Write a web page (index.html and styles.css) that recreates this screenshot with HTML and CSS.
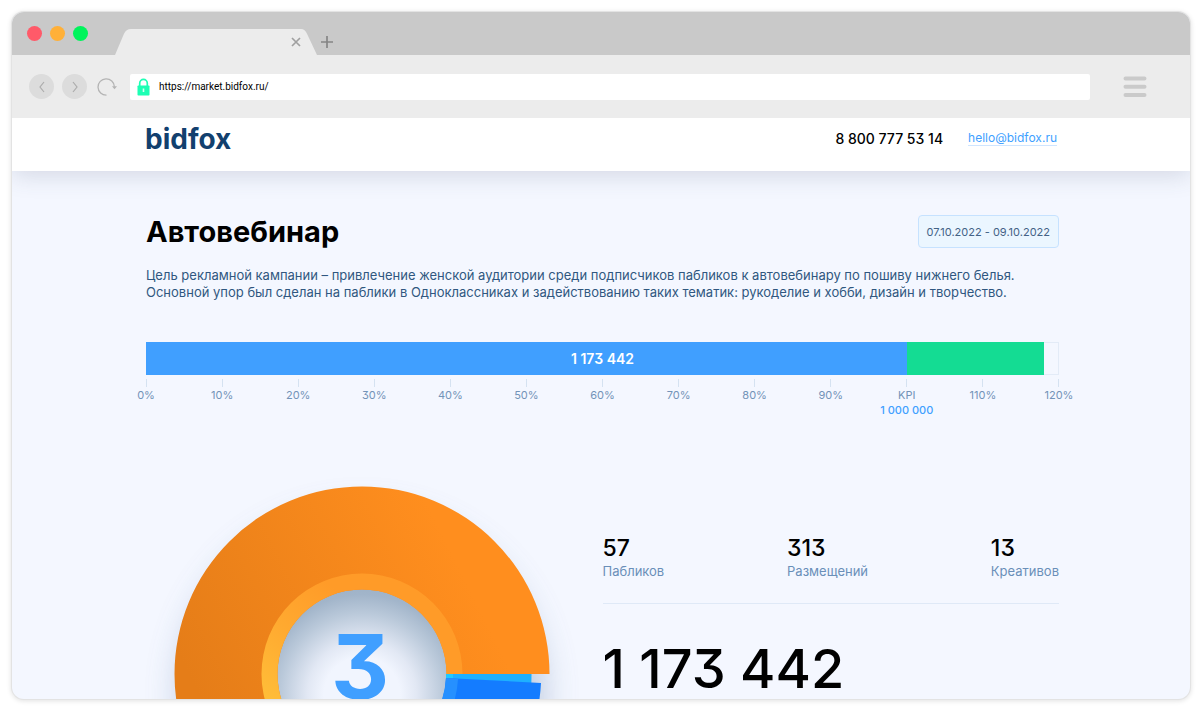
FILE: index.html
```
<!DOCTYPE html>
<html lang="ru">
<head>
<meta charset="utf-8">
<meta name="viewport" content="width=device-width, initial-scale=1">
<title>bidfox</title>
<link rel="stylesheet" href="styles.css">
</head>
<body>
<div class="window">
  <div class="tabbar">
    <div class="lights"><span class="light red"></span><span class="light amber"></span><span class="light green"></span></div>
    <div class="tab">
      <svg class="tab-shape" viewBox="0 0 202 27" preserveAspectRatio="none" aria-hidden="true"><path d="M0 27 L9 5 Q11 0 16 0 H186 Q190 0 192 5 L202 27Z" fill="#ececec"/></svg>
      <button class="icon-btn tab-close" aria-label="Закрыть вкладку"><svg width="10" height="10" viewBox="0 0 10 10"><path d="M1 1l8 8M9 1l-8 8" stroke="#a0a0a0" stroke-width="1.7" fill="none"/></svg></button>
    </div>
    <button class="icon-btn tab-new" aria-label="Новая вкладка"><svg width="12" height="12" viewBox="0 0 12 12"><path d="M6 0v12M0 6h12" stroke="#858585" stroke-width="1.7" fill="none"/></svg></button>
  </div>
  <div class="toolbar">
    <button class="nav-btn" aria-label="Назад"><svg width="8" height="12" viewBox="0 0 8 12"><path d="M6 1L2 6l4 5" stroke="#acacac" stroke-width="1.2" fill="none"/></svg></button>
    <button class="nav-btn" aria-label="Вперёд"><svg width="8" height="12" viewBox="0 0 8 12"><path d="M2 1l4 5-4 5" stroke="#acacac" stroke-width="1.2" fill="none"/></svg></button>
    <button class="icon-btn reload" aria-label="Обновить"><svg width="20" height="20" viewBox="0 0 20 20"><path d="M9.500 18.200A8.200 8.200 0 1 1 17.400 9.700" stroke="#b4b4b4" stroke-width="1.300" fill="none"/><path d="M15 9.200h5l-2.500 3z" fill="#b4b4b4"/></svg></button>
    <div class="address">
      <svg width="13" height="18" viewBox="0 0 13 18" aria-hidden="true"><path d="M2.700 8V5.200a3.800 3.800 0 0 1 7.600 0V8" stroke="#1dffb4" stroke-width="1.700" fill="none"/><rect x="0.500" y="7.500" width="12" height="10" rx="0.800" fill="#1dffb4"/><path d="M6.500 10.500v3.500" stroke="#d5fff2" stroke-width="1.600"/></svg>
      <input class="url" type="text" aria-label="Адрес" value="https://market.bidfox.ru/">
    </div>
    <button class="icon-btn menu" aria-label="Меню"><svg width="24" height="22" viewBox="0 0 24 22"><path d="M2.500 2.500h19M2.500 10.700h19M2.500 18.900h19" stroke="#cacaca" stroke-width="4" stroke-linecap="round"/></svg></button>
  </div>
  <header class="site-header">
    <a class="logo" href="#">bidfox</a>
    <div class="contacts"><span class="phone">8 800 777 53 14</span><a class="mail" href="mailto:hello@bidfox.ru">hello@bidfox.ru</a></div>
  </header>
  <main class="page">
    <div class="title-row"><h1>Автовебинар</h1><button class="dates">07.10.2022 - 09.10.2022</button></div>
    <p class="lead">Цель рекламной кампании – привлечение женской аудитории среди подписчиков пабликов к автовебинару по пошиву нижнего белья.<br>Основной упор был сделан на паблики в Одноклассниках и задействованию таких тематик: рукоделие и хобби, дизайн и творчество.</p>
    <section class="progress">
      <div class="track"><div class="done">1 173 442</div><div class="over"></div></div>
      <ol class="scale">
        <li>0%</li><li>10%</li><li>20%</li><li>30%</li><li>40%</li><li>50%</li><li>60%</li><li>70%</li><li>80%</li><li>90%</li><li>KPI<b>1 000 000</b></li><li>110%</li><li>120%</li>
      </ol>
    </section>
    <section class="summary">
      <svg class="donut" viewBox="0 0 376 376" role="img" aria-label="3">
        <defs>
          <linearGradient id="orange" gradientUnits="userSpaceOnUse" x1="30" y1="220" x2="290" y2="90"><stop offset="0" stop-color="#e57d18"/><stop offset="1" stop-color="#ff8e1e"/></linearGradient>
          <linearGradient id="rim" gradientUnits="userSpaceOnUse" x1="90" y1="210" x2="170" y2="110"><stop offset="0" stop-color="#ffbd38"/><stop offset="0.500" stop-color="#ffaa30"/><stop offset="1" stop-color="#ff9b28"/></linearGradient>
          <radialGradient id="hole" gradientUnits="userSpaceOnUse" cx="188" cy="209" r="109"><stop offset="0.350" stop-color="#f1f5fe"/><stop offset="0.500" stop-color="#e2e8f4"/><stop offset="0.750" stop-color="#bac9da"/><stop offset="0.920" stop-color="#a2b5ca"/><stop offset="1" stop-color="#9eb2c8"/></radialGradient>
          <filter id="shade" x="-20%" y="-20%" width="140%" height="140%"><feGaussianBlur stdDeviation="18"/></filter>
        </defs>
        <circle cx="188" cy="208" r="180" fill="#5b7ba8" opacity="0.400" filter="url(#shade)"/>
        <circle cx="188" cy="188" r="86" fill="url(#hole)"/>
        <path d="M272 188H357.500A169.500 169.500 0 0 1 357 202L272 198Z" fill="#1eb0ff"/>
        <path d="M272 188h7v8h-7z" fill="#1fc9ff"/>
        <path d="M272 192L367 197A179 179 0 0 1 250 356L221 266A84.500 84.500 0 0 0 272 192Z" fill="#147cff"/>
        <path d="M272 192L284 193A97 97 0 0 1 221 279L216 267A84.500 84.500 0 0 0 272 192Z" fill="#2690ff"/>
        <path d="M375.500 188A187.500 187.500 0 1 0 188 375.500V272.500A84.500 84.500 0 1 1 272.500 188Z" fill="url(#orange)"/>
        <path d="M288.500 188A100.500 100.500 0 1 0 188 288.500V272.500A84.500 84.500 0 1 1 272.500 188Z" fill="url(#rim)"/>
        <text class="donut-value" x="186" y="213" text-anchor="middle">3</text>
      </svg>
      <div class="figures">
        <dl class="stats">
          <div><dt>Пабликов</dt><dd>57</dd></div>
          <div><dt>Размещений</dt><dd>313</dd></div>
          <div><dt>Креативов</dt><dd>13</dd></div>
        </dl>
        <div class="total">1 173 442</div>
      </div>
    </section>
  </main>
</div>
</body>
</html>
```
FILE: styles.css
```
* { box-sizing: border-box; }
body {
  margin: 0;
  padding: 12px 10px 10px 12px;
  height: 100vh;
  background: #fff;
  color: #000;
  font-family: Inter, "Open Sans", sans-serif;
  font-feature-settings: "cv09";
}
button, input { font: inherit; color: inherit; }
.window {
  display: flex;
  flex-direction: column;
  height: 100%;
  overflow: hidden;
  border-radius: 12px;
  background: #f4f7ff;
  box-shadow: 0 0 0 1px #e3e3e3, 0 1px 5px 1px rgba(0, 0, 0, 0.12);
}
.tabbar {
  display: flex;
  align-items: flex-end;
  flex: none;
  height: 43px;
  background: #c9c9c9;
}
.lights { display: flex; gap: 8px; padding: 0 27px 14px 15px; }
.light { width: 15px; height: 15px; border-radius: 50%; }
.red { background: #ff5a69; }
.amber { background: #ffb038; }
.green { background: #00f45c; }
.tab { display: grid; width: 202px; height: 26px; }
.tab-shape { grid-area: 1 / 1; width: 100%; height: 100%; }
.icon-btn {
  display: flex;
  padding: 0;
  border: 0;
  background: none;
}
.tab-close { grid-area: 1 / 1; justify-self: end; align-self: center; margin-right: 16px; }
.tab-new { margin: 0 0 7px 4px; }
.toolbar {
  display: flex;
  align-items: center;
  flex: none;
  position: relative;
  z-index: 1;
  height: 63px;
  padding: 0 43px 0 17px;
  background: #ececec;
}
.nav-btn {
  display: grid;
  place-items: center;
  width: 25px;
  height: 25px;
  margin-right: 8px;
  padding: 0;
  border: 0;
  border-radius: 50%;
  background: #dcdcdc;
}
.reload { margin: 0 13px 0 2px; }
.address {
  display: flex;
  align-items: center;
  flex: 1;
  gap: 9px;
  height: 26px;
  padding: 0 7px;
  border-radius: 2px;
  background: #fff;
}
.url { flex: 1; padding: 0; border: 0; outline: 0; background: none; font-family: Roboto, sans-serif; font-size: 10px; }
.menu { margin-left: 33px; }
.site-header {
  display: flex;
  justify-content: space-between;
  align-items: center;
  flex: none;
  height: 53px;
  padding: 0 133px 12px;
  background: #fff;
  box-shadow: 0 4px 24px rgba(60, 70, 100, 0.18);
}
.logo { color: #12406e; font-size: 28px; font-weight: 700; line-height: 32px; text-decoration: none; }
.contacts { display: flex; align-items: center; gap: 25px; }
.phone { font-size: 14px; font-weight: 500; }
.mail {
  border-bottom: 1px solid #cfe5ff;
  color: #409fff;
  font-size: 12px;
  line-height: 14px;
  text-decoration: none;
}
.page { padding: 44px 131px 0 134px; }
.title-row { display: flex; justify-content: space-between; align-items: center; }
h1 { margin: 0; font-size: 29px; font-weight: 700; line-height: 33px; }
.dates {
  height: 33px;
  padding: 0 8px;
  border: 1px solid #c6e2ff;
  border-radius: 4px;
  background: #ebf6ff;
  color: #436286;
  font-size: 11px;
}
.lead { margin: 19px 0 41px; color: #305780; font-size: 13px; line-height: 17px; }
.track { display: flex; height: 33px; box-shadow: inset 0 0 0 1px #e3ebf7; }
.done {
  width: 83.33%;
  padding-left: 16.67%;
  background: #409fff;
  color: #fff;
  font-size: 14px;
  font-weight: 600;
  line-height: 34px;
  text-align: center;
}
.over { width: 15%; background: #14dc93; }
.scale {
  display: flex;
  justify-content: space-between;
  height: 42px;
  margin: 4px 0 0;
  padding: 0;
  list-style: none;
  color: #7393b8;
  font-size: 11px;
  line-height: 15px;
}
.scale li { display: flex; flex-direction: column; align-items: center; width: 0; white-space: nowrap; }
.scale li::before { content: ""; flex: none; width: 1px; height: 8px; margin-bottom: 1px; background: #d5e2f1; }
.scale b { color: #409fff; font-weight: 500; }
.summary {
  display: grid;
  grid-template-columns: 1fr 1fr;
  margin-top: 65px;
}
.donut { width: 376px; margin-left: 28px; overflow: visible; }
.donut-value { fill: #409fff; font-size: 90px; font-weight: 700; }
.figures { padding-top: 48px; }
.stats {
  display: flex;
  justify-content: space-between;
  margin: 0;
  padding-bottom: 23px;
  border-bottom: 1px solid #dfe9f7;
}
.stats div { display: flex; flex-direction: column-reverse; }
.stats dt { color: #6a8fb9; font-size: 13px; line-height: 18px; }
.stats dd { margin: 0; font-size: 23px; font-weight: 500; line-height: 28px; }
.total { margin-top: 37px; font-size: 54px; font-weight: 500; line-height: 56px; }
```
